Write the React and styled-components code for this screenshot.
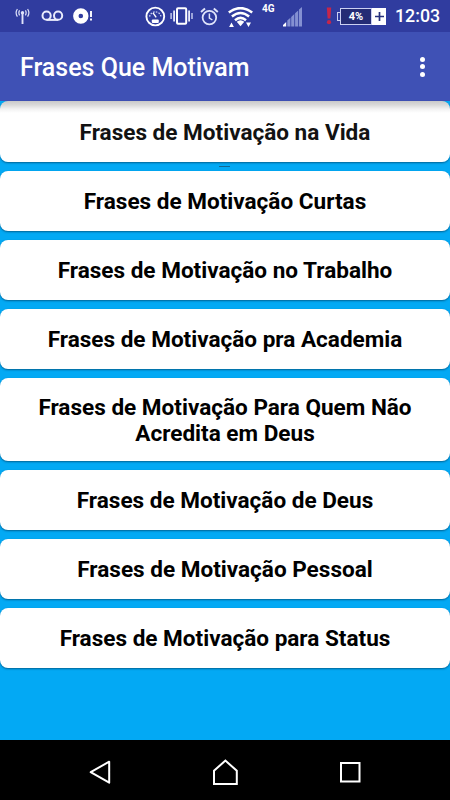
import React from 'react'
import styled, { createGlobalStyle } from 'styled-components';

const phrases = [
  'Frases de Motivação na Vida',
  'Frases de Motivação Curtas',
  'Frases de Motivação no Trabalho',
  'Frases de Motivação pra Academia',
  'Frases de Motivação Para Quem Não Acredita em Deus',
  'Frases de Motivação de Deus',
  'Frases de Motivação Pessoal',
  'Frases de Motivação para Status',
]

const AntennaIcon = () => (
  <Icon width="15" height="17" viewBox="0 0 15 17">
    <circle cx="7.5" cy="4.8" r="1.7" fill="#dfe3fa" />
    <path d="M7.5 5v11" stroke="#dfe3fa" strokeWidth="1.9" />
    <path d="M4.6 2.4q-1.5 2.4 0 5M2.4 1q-2.6 3.8 0 7.6M10.4 2.4q1.5 2.4 0 5M12.6 1q2.6 3.8 0 7.6" stroke="#dfe3fa" strokeWidth="1.2" />
  </Icon>
)

const VoicemailIcon = () => (
  <Icon width="23" height="12" viewBox="0 0 23 12">
    <circle cx="5.6" cy="5.7" r="4.1" stroke="#e9ebfc" strokeWidth="2" />
    <circle cx="17.1" cy="5.7" r="4.1" stroke="#e9ebfc" strokeWidth="2" />
    <path d="M5.6 9.9h11.5" stroke="#e9ebfc" strokeWidth="2" />
  </Icon>
)

const DiscIcon = () => (
  <Icon width="20" height="16" viewBox="0 0 20 16">
    <circle cx="7.8" cy="8" r="5" stroke="#fff" strokeWidth="5.4" />
    <path d="M18 3v6M18 10.4v2.2" stroke="#fff" strokeWidth="1.9" />
  </Icon>
)

const GaugeIcon = () => (
  <Icon width="21" height="21" viewBox="0 0 21 21">
    <circle cx="10.3" cy="10.5" r="8.9" stroke="#fff" strokeWidth="1.9" />
    <path d="M4.6 10.6a5.8 5.8 0 0 1 11.4 0" stroke="#cbd0f2" strokeWidth="1.3" strokeDasharray="1.6 1.2" />
    <path d="M8 6.8l3.2 4.6" stroke="#fff" strokeWidth="1.4" />
    <rect x="6.8" y="13.6" width="7" height="3.4" rx="1" fill="#fff" />
  </Icon>
)

const VibrateIcon = () => (
  <Icon width="23" height="18" viewBox="0 0 23 18">
    <rect x="7" y="1.2" width="9.2" height="15.6" rx="1" stroke="#fff" strokeWidth="2" />
    <path d="M4.1 3.5v11M19.1 3.5v11" stroke="#e9ebfc" strokeWidth="1.8" />
    <path d="M1.1 6v6M22 6v6" stroke="#cbd0f2" strokeWidth="1.4" />
  </Icon>
)

const AlarmIcon = () => (
  <Icon width="19" height="19" viewBox="0 0 19 19">
    <circle cx="9.4" cy="10.6" r="6.8" stroke="#dfe3fa" strokeWidth="1.8" />
    <path d="M1 5l4-3.4M17.8 5l-4-3.4" stroke="#dfe3fa" strokeWidth="2" />
    <path d="M9.4 6.4v4.6l3 2" stroke="#dfe3fa" strokeWidth="1.5" />
  </Icon>
)

const WifiIcon = () => (
  <Icon width="25" height="21" viewBox="0 0 25 21">
    <path d="M.8 5.6q11.6-9 23.4 0" stroke="#fff" strokeWidth="2.5" />
    <path d="M3.9 9.5q8.6-7 17.2 0" stroke="#fff" strokeWidth="2.5" />
    <path d="M7 13.2q5.5-4.6 11 0" stroke="#fff" strokeWidth="2.5" />
    <path d="M8.7 14.8q3.8-3 7.6 0L12.5 19.2z" fill="#fff" />
    <path d="M1.1 20l2.4-4.4L5.9 20zM18 15.6h5L20.5 20z" fill="#fff" />
  </Icon>
)

const SignalIcon = () => (
  <Icon width="20" height="20" viewBox="0 0 20 20">
    <path d="M0 19.5v-1.6l3.2-3v4.6z" fill="#fff" />
    <path d="M4.3 19.5v-6l3.1-2.8v8.8zM8.2 19.5v-9.6L11.3 7v12.5zM12.1 19.5V6.2l3.1-2.8v16.1zM16 19.5V2.6L19 0v19.5z" fill="#8490d2" />
  </Icon>
)

const AlertIcon = () => (
  <Icon width="6" height="18" viewBox="0 0 6 18">
    <path d="M.8.5h4.4l-.8 11H1.6z" fill="#c5264a" />
    <circle cx="3" cy="15.2" r="2.1" fill="#c5264a" />
  </Icon>
)

const App = () => {
  return (
    <Screen>
      <GlobalStyle />
      <StatusBar>
        <Slot $gap={15}><AntennaIcon /></Slot>
        <Slot $gap={11}><VoicemailIcon /></Slot>
        <Slot $gap={9}><DiscIcon /></Slot>
        <Slot $gap={52}><GaugeIcon /></Slot>
        <Slot $gap={4}><VibrateIcon /></Slot>
        <Slot $gap={7}><AlarmIcon /></Slot>
        <Slot $gap={9} $drop={2}><WifiIcon /></Slot>
        <Network>4G</Network>
        <Slot $gap={7} $drop={1}><SignalIcon /></Slot>
        <Slot $gap={23}><AlertIcon /></Slot>
        <Battery>
          <BatteryTip />
          <BatteryLevel>4%</BatteryLevel>
          <BatteryPlus>
            <svg width="9" height="9" viewBox="0 0 9 9">
              <path d="M4.5 0v9M0 4.5h9" stroke="#25307d" strokeWidth="1.7" />
            </svg>
          </BatteryPlus>
        </Battery>
        <Clock>12:03</Clock>
      </StatusBar>

      <AppBar>
        <Title>Frases Que Motivam</Title>
        <MenuButton aria-label="Menu">
          <Dot />
          <Dot />
          <Dot />
        </MenuButton>
      </AppBar>

      <List>
        <Mark />
        {phrases.map((phrase, index) => (
          <Card key={phrase} $first={index === 0}>{phrase}</Card>
        ))}
      </List>

      <NavBar>
        <svg width="22" height="25" viewBox="0 0 22 25" fill="none" stroke="#fff" strokeWidth="2">
          <path d="M20.2 1.7v21L1.7 12.2z" strokeLinejoin="round" />
        </svg>
        <svg width="26" height="27" viewBox="0 0 26 27" fill="none" stroke="#fff" strokeWidth="2">
          <path d="M2 25V11.7L13.4 1.6l11.4 10.1V25z" />
        </svg>
        <svg width="22" height="22" viewBox="0 0 22 22" fill="none" stroke="#fff" strokeWidth="2">
          <rect x="2" y="2" width="18.5" height="18.5" />
        </svg>
      </NavBar>
    </Screen>
  )
}

const GlobalStyle = createGlobalStyle`
  body {
    margin: 0;
    background: #03a9f4;
  }
  * {
    box-sizing: border-box;
  }
`

const Screen = styled.div`
  display: flex;
  flex-direction: column;
  width: 450px;
  height: 800px;
  overflow: hidden;
  background: #03a9f4;
  font-family: Roboto, "Liberation Sans", sans-serif;
`

const StatusBar = styled.div`
  display: flex;
  flex: none;
  align-items: center;
  height: 32px;
  background: #303c9f;
  color: #fff;
`

const Slot = styled.span`
  display: flex;
  margin-left: ${({ $gap }) => $gap}px;
  padding-top: ${({ $drop }) => $drop || 0}px;
`

const Icon = styled.svg`
  display: block;
  fill: none;
`

const Network = styled.span`
  align-self: flex-start;
  width: 14px;
  margin: 3px 0 0 9px;
  font-size: 10px;
  font-weight: 700;
  line-height: 11px;
`

const Battery = styled.div`
  display: flex;
  align-items: center;
  height: 17px;
  margin-left: 5px;
`

const BatteryTip = styled.span`
  width: 3px;
  height: 9px;
  border: 1px solid #cbd0f2;
  border-right: none;
`

const BatteryLevel = styled.span`
  width: 32px;
  height: 17px;
  border: 1px solid #cbd0f2;
  background: #242c75;
  font-size: 11px;
  font-weight: 700;
  line-height: 16px;
  text-align: center;
`

const BatteryPlus = styled.span`
  display: flex;
  align-items: center;
  justify-content: center;
  width: 14px;
  height: 17px;
  background: #fff;
`

const Clock = styled.span`
  margin-left: 9px;
  font-size: 17.8px;
  font-weight: 500;
  line-height: 32px;
`

const AppBar = styled.header`
  display: flex;
  flex: none;
  align-items: center;
  justify-content: space-between;
  height: 69px;
  padding: 0 20px;
  background: #3f51b5;
`

const Title = styled.h1`
  margin: 0;
  padding-top: 2px;
  color: #fff;
  font-size: 25px;
  font-weight: 500;
  line-height: 32px;
  white-space: nowrap;
`

const MenuButton = styled.button`
  display: flex;
  flex-direction: column;
  align-items: center;
  gap: 2.5px;
  width: 15px;
  padding: 0;
  border: none;
  background: none;
`

const Dot = styled.span`
  width: 5px;
  height: 5px;
  border-radius: 50%;
  background: #fff;
`

const List = styled.main`
  position: relative;
  display: flex;
  flex: 1;
  flex-direction: column;
  gap: 8.8px;
`

const Card = styled.div`
  display: flex;
  align-items: center;
  justify-content: center;
  min-height: ${({ $first }) => $first ? '61.1px' : '60.3px'};
  padding: ${({ $first }) => $first ? '17.2px' : '16.4px'} 30px 13.6px;
  border-radius: 8px;
  background: ${({ $first }) => $first ? 'linear-gradient(#c9c9c9, #dadada 4px, #f2f2f2 8px, #fff 12px)' : '#fff'};
  box-shadow: 0 1px 2px rgba(0, 40, 70, .55);
  color: ${({ $first }) => $first ? '#121212' : '#000'};
  font-size: 22.55px;
  font-weight: 700;
  line-height: 26.4px;
  text-align: center;
`

// thin drag mark between the first two cards
const Mark = styled.span`
  position: absolute;
  top: 65px;
  left: 219px;
  width: 11px;
  height: 1px;
  background: #14678f;
`

const NavBar = styled.nav`
  display: flex;
  flex: none;
  align-items: center;
  justify-content: space-between;
  height: 60px;
  padding: 4px 89px 0;
  background: #000;
`

export default App
